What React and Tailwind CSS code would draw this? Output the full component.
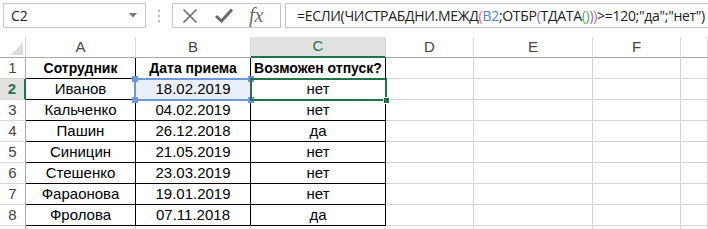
import React from "react";

const rows = [
  ["Сотрудник", "Дата приема", "Возможен отпуск?"],
  ["Иванов", "18.02.2019", "нет"],
  ["Кальченко", "04.02.2019", "нет"],
  ["Пашин", "26.12.2018", "да"],
  ["Синицин", "21.05.2019", "нет"],
  ["Стешенко", "23.03.2019", "нет"],
  ["Фараонова", "19.01.2019", "нет"],
  ["Фролова", "07.11.2018", "да"],
];

const letters = ["A", "B", "C", "D", "E", "F", ""];

function Corner() {
  return (
    <div className="relative border-r border-b border-r-[#d4d4d4] border-b-[#ababab] bg-white">
      <svg className="absolute left-[11px] top-[5px]" width="12" height="13" viewBox="0 0 12 13">
        <polygon points="12,0 12,13 0,13" fill="#dcdcdc" />
      </svg>
    </div>
  );
}

export default function App() {
  const cell = "flex items-end justify-center leading-[18px] pb-[1px] border-r border-b overflow-hidden whitespace-nowrap";
  return (
    <div
      className="relative w-[708px] h-[229px] overflow-hidden bg-white text-[15px] text-black"
      style={{ fontFamily: '"Liberation Sans", Arial, sans-serif' }}
    >
      {/* formula bar */}
      <div className="flex items-start h-[37px] pt-[3px] bg-white">
        <div className="ml-[3px] w-[143px] h-[25px] border border-[#c6c6c6] flex items-center justify-between pl-[7px] pr-[8px]">
          <span className="text-[14px] text-[#222]" style={{ fontFamily: '"Open Sans", sans-serif' }}>C2</span>
          <svg width="8" height="5" viewBox="0 0 8 5"><polygon points="0,0 8,0 4,4.5" fill="#777" /></svg>
        </div>
        <div className="w-[26px] h-[25px] flex flex-col items-center justify-center gap-[3px]">
          <div className="w-[2px] h-[2px] bg-[#b0b0b0]" />
          <div className="w-[2px] h-[2px] bg-[#b0b0b0]" />
          <div className="w-[2px] h-[2px] bg-[#b0b0b0]" />
        </div>
        <div className="w-[109px] h-[25px] border border-[#c6c6c6] flex items-center">
          <svg className="ml-[9px]" width="16" height="16" viewBox="0 0 16 16">
            <path d="M1.5 1.5 L14.5 14.5 M14.5 1.5 L1.5 14.5" stroke="#6a6a6a" strokeWidth="1.6" fill="none" />
          </svg>
          <svg className="ml-[17px]" width="18" height="15" viewBox="0 0 18 15">
            <path d="M1 8 L6.5 13 L17 1.5" stroke="#6a6a6a" strokeWidth="3" fill="none" strokeLinejoin="miter" />
          </svg>
          <span
            className="ml-[16px] text-[20px] italic text-[#6a6a6a] leading-none -mt-[2px]"
            style={{ fontFamily: '"Liberation Serif", "Times New Roman", serif' }}
          >
            fx
          </span>
        </div>
        <div
          className="ml-[4px] flex-1 h-[25px] border border-[#c6c6c6] border-r-0 flex items-center pl-[11px] text-[14px] text-[#222] whitespace-nowrap overflow-hidden"
          style={{ fontFamily: '"Open Sans", sans-serif', letterSpacing: "-0.3px" }}
        >
          <span>=ЕСЛИ(ЧИСТРАБДНИ.МЕЖД</span>
          <span className="text-[#e06c75]">(</span>
          <span className="text-[#4f81d6]">B2</span>
          <span>;ОТБР</span>
          <span className="text-[#a05cc4]">(</span>
          <span>ТДАТА</span>
          <span className="text-[#4caa4c]">()</span>
          <span className="text-[#a05cc4]">)</span>
          <span className="text-[#e06c75]">)</span>
          <span>&gt;=120;"да";"нет")</span>
        </div>
      </div>

      {/* grid */}
      <div className="grid grid-cols-[26px_110px_115px_135px_88px_119px_88px_1fr] grid-rows-[21px_repeat(9,21px)]">
        <Corner />
        {letters.map((l, i) => (
          <div
            key={"h" + i}
            className={
              "flex items-center justify-center border-r border-r-[#d8d8d8] " +
              (i === 2
                ? "bg-[#e1e1e1] border-b-2 border-b-[#217346] text-[#217346]"
                : "bg-white border-b border-b-[#ababab] text-[#444]")
            }
          >
            {l}
          </div>
        ))}
        {Array.from({ length: 9 }).map((_, r) => {
          const data = rows[r];
          const sel = r === 1;
          return (
            <React.Fragment key={"r" + r}>
              <div
                className={
                  "flex items-end justify-center leading-[18px] pb-[1px] border-b border-b-[#d8d8d8] " +
                  (sel
                    ? "bg-[#e1e1e1] border-r-2 border-r-[#217346] text-[#217346] font-bold"
                    : "bg-white border-r border-r-[#ababab] text-[#444]")
                }
              >
                {r < 8 ? r + 1 : ""}
              </div>
              {Array.from({ length: 7 }).map((__, c) => {
                const inTable = data && c < 3;
                const b2 = r === 1 && c === 1;
                return (
                  <div
                    key={c}
                    className={
                      cell +
                      " " +
                      (inTable ? "border-r-black border-b-black " : "border-r-[#d4d4d4] border-b-[#d4d4d4] ") +
                      (b2 ? "bg-[#eaf0fb] " : "") +
                      (r === 0 && c < 3 ? "font-bold text-[14px]" : "")
                    }
                  >
                    {inTable ? data[c] : ""}
                  </div>
                );
              })}
            </React.Fragment>
          );
        })}
      </div>

      {/* B2 reference highlight */}
      <div className="absolute left-[134px] top-[78px] w-[118px] h-[23px] border-2 border-[#7096e0] pointer-events-none" />
      <div className="absolute left-[132px] top-[76px] w-[6px] h-[6px] bg-[#7096e0]" />
      <div className="absolute left-[248px] top-[76px] w-[6px] h-[6px] bg-[#7096e0]" />
      <div className="absolute left-[132px] top-[97px] w-[6px] h-[6px] bg-[#7096e0]" />
      <div className="absolute left-[248px] top-[97px] w-[6px] h-[6px] bg-[#7096e0]" />

      {/* C2 active cell */}
      <div className="absolute left-[250px] top-[78px] w-[137px] h-[23px] border-2 border-[#217346] pointer-events-none" />
      <div className="absolute left-[383px] top-[97px] w-[7px] h-[7px] bg-[#217346] border border-white" />
    </div>
  );
}
